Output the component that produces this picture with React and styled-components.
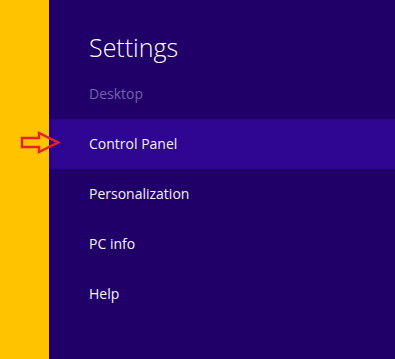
import React from 'react';
import styled, { createGlobalStyle } from 'styled-components';

const GlobalStyle = createGlobalStyle`
    html, body {
        margin: 0;
        padding: 0;
        width: 395px;
        height: 359px;
        overflow: hidden;
    }
    body {
        font-family: "Open Sans", "Noto Sans", sans-serif;
    }
`

const Screen = styled.div`
    position: relative;
    display: flex;
    width: 395px;
    height: 359px;
`

const Strip = styled.div`
    width: 49px;
    flex-shrink: 0;
    background-color: #ffc300;
`

const Pane = styled.div`
    flex: 1;
    display: flex;
    flex-direction: column;
    background-color: #200068;
    padding-top: 30px;
`

const Title = styled.div`
    padding-left: 40px;
    height: 39px;
    font-size: 25px;
    font-weight: 300;
    line-height: 35px;
    color: #ffffff;
`

const Item = styled.div`
    height: 50px;
    display: flex;
    align-items: center;
    padding-left: 40px;
    padding-bottom: 1px;
    box-sizing: border-box;
    font-size: 14px;
    color: ${props => props.dim ? '#7462ae' : '#f4f2fa'};
    background-color: ${props => props.active ? '#2d0590' : 'transparent'};
`

const Pointer = styled.svg`
    position: absolute;
    left: 20px;
    top: 131px;
`

const items = [
    { label: 'Desktop', dim: true },
    { label: 'Control Panel', active: true },
    { label: 'Personalization' },
    { label: 'PC info' },
    { label: 'Help' },
]

export default function App() {
    return (
        <Screen>
            <GlobalStyle />
            <Strip />
            <Pane>
                <Title>Settings</Title>
                {items.map(item => (
                    <Item key={item.label} dim={item.dim} active={item.active}>
                        {item.label}
                    </Item>
                ))}
            </Pane>
            {/* red annotation arrow */}
            <Pointer width="41" height="23" viewBox="0 0 41 23">
                <path
                    d="M2 7 H19 V2 L38 11.5 L19 21 V16 H2 Z"
                    fill="none"
                    stroke="#e8202a"
                    strokeWidth="2.5"
                    strokeLinejoin="miter"
                />
            </Pointer>
        </Screen>
    )
}
